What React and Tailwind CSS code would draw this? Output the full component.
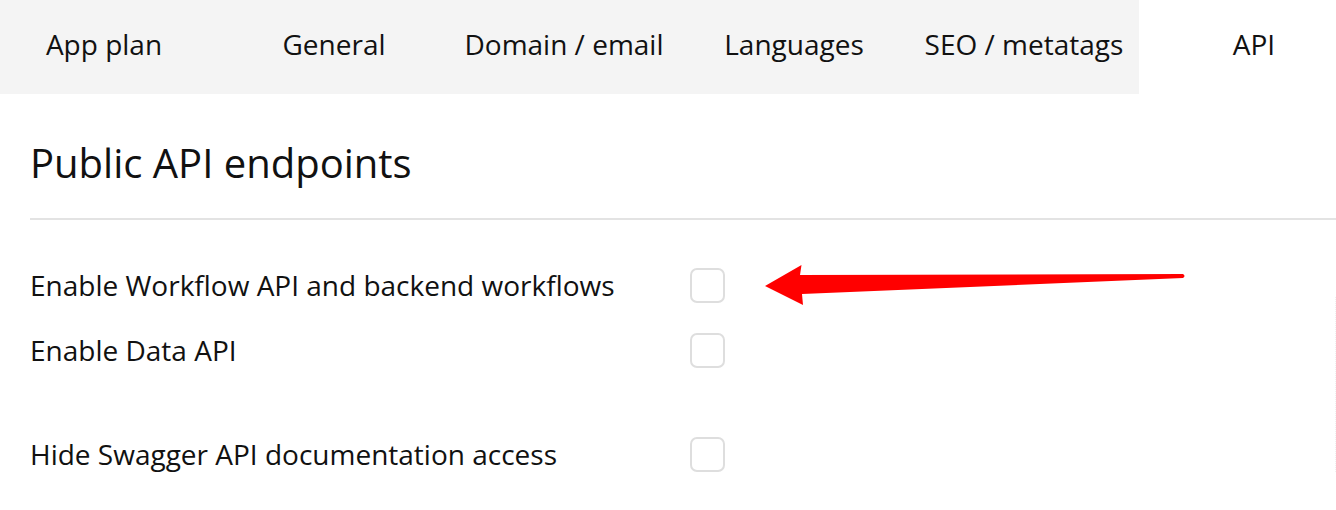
import React from "react";

const tabs = ["App plan", "General", "Domain / email", "Languages", "SEO / metatags", "API"];

const rows = [
  { label: "Enable Workflow API and backend workflows", gap: "mt-[48px]" },
  { label: "Enable Data API", gap: "mt-[30px]" },
  { label: "Hide Swagger API documentation access", gap: "mt-[69px]" },
];

function Checkbox() {
  return <div className="w-[35px] h-[35px] rounded-[7px] border-2 border-[#dedede] bg-white shrink-0"></div>;
}

export default function App() {
  return (
    <div className="relative w-[1336px] h-[510px] overflow-hidden bg-white text-[#111] font-['Open_Sans',sans-serif]">
      <div className="flex h-[94px] bg-[#f4f4f4] ml-[-11px] w-[1347px]">
        {tabs.map((tab, i) => (
          <div
            key={tab}
            className={
              "w-[230px] shrink-0 flex items-center justify-center pb-[6px] text-[28px] " +
              (i === tabs.length - 1 ? "bg-white" : "")
            }
          >
            {tab}
          </div>
        ))}
      </div>

      <div className="pl-[30px]">
        <h1 className="text-[40px] leading-[50px] mt-[44px]">Public API endpoints</h1>
        <div className="h-[2px] bg-[#e3e3e3] mt-[30px]"></div>

        {rows.map((row) => (
          <div key={row.label} className={"flex items-center " + row.gap}>
            <div className="w-[660px] text-[28px] leading-[35px]">{row.label}</div>
            <Checkbox />
          </div>
        ))}
      </div>

      <div className="absolute right-0 top-[297px] h-[175px] border-r border-dotted border-[#f0f0f0]"></div>

      <svg className="absolute left-0 top-0" width="1336" height="510">
        <path
          d="M765 286 L801.5 265 L800 275 L1183 274 Q1186 276 1183 278 L802 294 L803 305 Z"
          fill="#ff0000"
        />
      </svg>
    </div>
  );
}
